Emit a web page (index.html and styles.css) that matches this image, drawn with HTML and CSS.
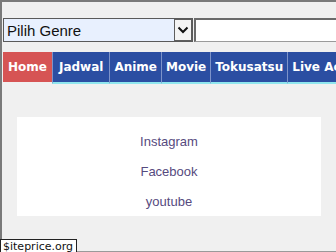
FILE: index.html
```html
<!DOCTYPE html>
<html lang="en">
  <head>
    <meta charset="UTF-8" />
    <meta name="viewport" content="width=device-width, initial-scale=1.0" />
    <title>Pilih Genre</title>
    <link rel="stylesheet" href="styles.css">
  </head>
  <body>
    <div class="page">
      <form class="search-row">
        <div class="genre-select">
          <select>
            <option>Pilih Genre</option>
          </select>
          <span class="select-arrow">
            <svg width="12" height="8" viewBox="0 0 12 8">
              <path d="M1.5 1.5 L6 6 L10.5 1.5" fill="none" stroke="#111" stroke-width="2" />
            </svg>
          </span>
        </div>
        <input type="text" class="search-box" />
      </form>

      <ul class="nav">
        <li class="active"><a href="#">Home</a></li>
        <li><a href="#">Jadwal</a></li>
        <li><a href="#">Anime</a></li>
        <li><a href="#">Movie</a></li>
        <li><a href="#">Tokusatsu</a></li>
        <li><a href="#">Live Action</a></li>
      </ul>

      <div class="social">
        <a href="#">Instagram</a>
        <a href="#">Facebook</a>
        <a href="#">youtube</a>
      </div>
    </div>

    <div class="badge">$iteprice.org</div>
  </body>
</html>
```

FILE: styles.css
```css
* {
  margin: 0;
  padding: 0;
  box-sizing: border-box;
}

body {
  height: 252px;
  background: #f0f0f0;
  font-family: "Liberation Sans", Arial, sans-serif;
  overflow: hidden;
  border-top: 2px solid #7a7a7a;
  border-left: 2px solid #7a7a7a;
  border-bottom: 1px solid #9a9a9a;
}

.page {
  width: 334px;
  overflow: hidden;
}

.search-row {
  display: flex;
  padding: 16px 0 0 1px;
  height: 40px;
}

.genre-select {
  position: relative;
  width: 190px;
  height: 24px;
  flex-shrink: 0;
}

.genre-select select {
  appearance: none;
  -webkit-appearance: none;
  width: 100%;
  height: 100%;
  background: #e8f0fe;
  border: 1px solid #5a5a5a;
  border-radius: 0;
  font-family: "Liberation Sans", Arial, sans-serif;
  font-size: 15px;
  color: #111;
  padding: 0 0 0 3px;
  outline: none;
}

.select-arrow {
  position: absolute;
  top: 1px;
  right: 1px;
  width: 18px;
  height: 22px;
  border: 1px solid #5e5e5e;
  background: #f4f4f4;
  display: flex;
  align-items: center;
  justify-content: center;
}

.search-box {
  margin-left: 1px;
  width: 200px;
  height: 24px;
  flex-shrink: 0;
  background: #fff;
  border: 1px solid #9a9a9a;
  border-top: 2px solid #6a6a6a;
  border-left: 2px solid #6a6a6a;
  outline: none;
}

.nav {
  list-style: none;
  display: flex;
  margin: 10px 0 0 1px;
  white-space: nowrap;
}

.nav li {
  background: #2b4ea2;
  border-left: 1px solid #7d93c9;
  border-bottom: 2px solid #8fe6ee;
}

.nav li.active {
  background: #d65454;
  border-left: none;
  border-bottom: 2px solid #f0f0f0;
}

.nav a {
  display: block;
  height: 30px;
  line-height: 31px;
  padding: 0 4px;
  color: #fff;
  text-decoration: none;
  font-family: "DejaVu Sans", Verdana, sans-serif;
  font-weight: bold;
  font-size: 12px;
}

.nav li.active a {
  padding: 0 5px;
}

.nav li:nth-child(2) a {
  padding: 0 6px;
}

.social {
  margin: 33px 15px 0 15px;
  background: #fff;
  height: 99px;
  padding-top: 10px;
  text-align: center;
}

.social a {
  display: block;
  line-height: 30px;
  font-size: 13px;
  color: #564a7e;
  text-decoration: none;
}

.badge {
  position: fixed;
  left: 0;
  top: 239px;
  height: 14px;
  background: #fff;
  border: 1px solid #222;
  font-family: "DejaVu Sans", Verdana, sans-serif;
  font-size: 11px;
  line-height: 13px;
  padding: 0 3px 0 2px;
  color: #111;
}
```
